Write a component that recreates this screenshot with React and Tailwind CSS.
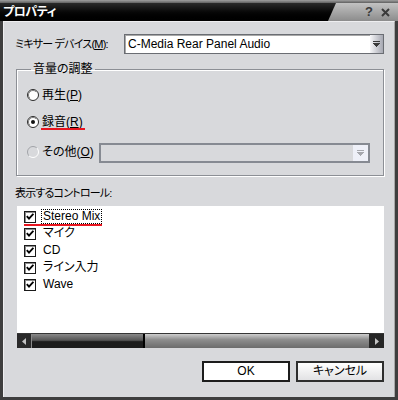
import React from 'react';

// combo arrow: bar + small triangle
function DropArrow({ color = '#3a3a3a' }) {
  return (
    <svg width="7" height="6" viewBox="0 0 7 6" fill={color} shapeRendering="crispEdges">
      <rect x="0" y="0" width="7" height="1" />
      <rect x="0" y="2" width="7" height="1" />
      <rect x="1" y="3" width="5" height="1" />
      <rect x="2" y="4" width="3" height="1" />
      <rect x="3" y="5" width="1" height="1" />
    </svg>
  );
}

function Radio({ checked, disabled }) {
  if (disabled) {
    return (
      <svg width="12" height="12" viewBox="0 0 12 12" className="shrink-0">
        <path d="M2.1 9.9 A5.5 5.5 0 0 1 9.9 2.1" fill="none" stroke="#a2a4a8" />
        <path d="M9.9 2.1 A5.5 5.5 0 0 1 2.1 9.9" fill="none" stroke="#ffffff" />
      </svg>
    );
  }
  return (
    <svg width="12" height="12" viewBox="0 0 12 12" className="shrink-0">
      <circle cx="6" cy="6" r="5.5" fill="#fff" stroke="#2a2a2a" />
      <path d="M2.8 9.2 A4.5 4.5 0 0 1 9.2 2.8" fill="none" stroke="#7c7c7c" />
      {checked && <circle cx="6" cy="6" r="2" fill="#111" />}
    </svg>
  );
}

function CheckBox() {
  return (
    <span className="w-[12px] h-[12px] shrink-0 border border-[#1a1a1a] bg-white flex items-center justify-center shadow-[inset_1px_1px_0_#8c8c8c]">
      <svg width="8" height="7" viewBox="0 0 8 7">
        <path d="M0.8 3.2 L3 5.6 L7.4 0.8" fill="none" stroke="#000" strokeWidth="1.9" />
      </svg>
    </span>
  );
}

const controls = ['Stereo Mix', 'マイク', 'CD', 'ライン入力', 'Wave'];

export default function App() {
  return (
    <div className="w-[398px] h-[400px] flex flex-col bg-[#3e3e3e] overflow-hidden select-none text-[12px] text-black font-['Liberation_Sans','Noto_Sans_CJK_JP',sans-serif] [font-feature-settings:'palt']">
      {/* title bar */}
      <div className="h-[21px] shrink-0 flex flex-col">
        <div className="h-[3px] bg-linear-to-b from-[#a0a0a0] to-[#606060]" />
        <div className="flex-1 flex bg-linear-to-b from-[#c2c2c2] to-[#8c8c8c]">
          <div className="w-[336px] flex items-center pl-[3px] bg-linear-to-b from-[#2a2a2a] via-[#080808] to-black [clip-path:polygon(0_0,100%_0,calc(100%-8px)_100%,0_100%)]">
            <span className="text-white font-bold text-[12px] leading-[14px] tracking-[-0.5px]">プロパティ</span>
          </div>
          <div className="flex-1 flex items-center justify-end gap-[8px] pr-[8px]">
            <span className="text-[#3a3a3a] font-bold text-[13px] leading-[14px]">?</span>
            <svg width="9" height="9" viewBox="0 0 9 9">
              <path d="M1 1 L8 8 M8 1 L1 8" stroke="#3a3a3a" strokeWidth="2" />
            </svg>
          </div>
        </div>
      </div>

      {/* client area */}
      <div className="flex-1 flex px-[3px] pb-[3px]">
        <div className="flex-1 flex flex-col bg-[#d8d9dc] border-t border-l border-[#eeeef0] border-r border-r-[#a8a8a8] pl-[12px] pr-[10px]">
          {/* mixer device */}
          <div className="flex items-center h-[20px] mt-[12px]">
            <span className="w-[108px] shrink-0 whitespace-nowrap text-[11px] leading-[14px] tracking-[-0.8px] -ml-[1px]">
              ミキサー デバイス(<span className="underline">M</span>):
            </span>
            <div className="flex-1 h-[20px] flex items-stretch bg-white border border-[#6a6d73] shadow-[inset_1px_1px_0_#a8a8a8] ml-[1px]">
              <span className="flex-1 pl-[3px] leading-[18px]">C-Media Rear Panel Audio</span>
              <span className="w-[13px] flex items-center justify-center bg-linear-to-r from-[#f6f6f8] to-[#a6a8b2]">
                <DropArrow />
              </span>
            </div>
          </div>

          {/* volume group */}
          <fieldset className="mt-[8px] border border-[#8c8f95] shadow-[inset_1px_1px_0_#ffffff,1px_1px_0_#ffffff] pl-[10px] pr-[12px] pt-[11px] pb-[12px]">
            <legend className="ml-[4px] px-[2px] leading-[14px]">音量の調整</legend>
            <div className="flex items-center gap-[3px] h-[16px]">
              <Radio />
              <span className="leading-[16px]">
                再生(<span className="underline">P</span>)
              </span>
            </div>
            <div className="flex items-center gap-[3px] h-[16px] mt-[11px]">
              <Radio checked />
              <span className="relative leading-[16px]">
                録音(<span className="underline">R</span>)
                <span className="absolute left-[-1px] right-[-2px] top-[14px] h-[2px] bg-[#e8141e]" />
              </span>
            </div>
            <div className="flex items-center h-[20px] mt-[13px]">
              <div className="w-[72px] flex items-center gap-[3px] mt-[-3px]">
                <Radio disabled />
                <span className="leading-[16px]">
                  その他(<span className="underline">O</span>)
                </span>
              </div>
              <div className="w-[271px] h-[20px] flex items-stretch border-2 border-[#868a92] bg-[#d8d9dc]">
                <span className="flex-1" />
                <span className="w-[15px] flex items-center justify-center bg-[#eef0f8]">
                  <DropArrow color="#a6a8ae" />
                </span>
              </div>
            </div>
          </fieldset>

          {/* controls list */}
          <div className="mt-[10px] h-[14px] text-[11px] leading-[14px] tracking-[-0.8px] -ml-[1px]">表示するコントロール:</div>
          <div className="mt-[6px] ml-[1px] h-[142px] flex flex-col bg-white">
            <div className="flex-1 flex flex-col pl-[7px] pt-[2px]">
              {controls.map((c, i) => (
                <div key={c} className="relative h-[17px] flex items-center">
                  <CheckBox />
                  <span
                    className={
                      'ml-[5px] px-[1px] h-[15px] leading-[13px] border ' +
                      (i === 0 ? 'border-dotted border-black' : 'border-transparent')
                    }
                  >
                    {c}
                  </span>
                  {i === 0 && <span className="absolute left-[0px] w-[78px] top-[16px] h-[2px] bg-[#e8141e]" />}
                </div>
              ))}
            </div>
            {/* horizontal scrollbar */}
            <div className="h-[15px] flex border-t border-[#363636]">
              <span className="w-[14px] flex items-center justify-center bg-[#2a2a2a]">
                <svg width="4" height="7" viewBox="0 0 4 7" fill="#c4c4c4"><polygon points="4,0 4,7 0,3.5" /></svg>
              </span>
              <span className="w-[114px] border-l border-[#8a8a8a] border-r-2 border-r-black bg-linear-to-b from-[#8a8a8a] via-[#555555] via-45% to-[#1c1c1c] to-55%" />
              <span className="flex-1 bg-linear-to-b from-[#cfcfcf] via-[#8e8e8e] via-40% to-[#6c6c6c]" />
              <span className="w-[15px] flex items-center justify-center bg-[#262626]">
                <svg width="4" height="7" viewBox="0 0 4 7" fill="#c4c4c4"><polygon points="0,0 0,7 4,3.5" /></svg>
              </span>
            </div>
          </div>

          {/* buttons */}
          <div className="mt-[13px] flex justify-end gap-[6px]">
            <button className="w-[88px] h-[21px] border-2 border-[#1c1c1c] bg-white leading-[15px]">OK</button>
            <button className="w-[88px] h-[21px] border-2 border-[#2e2e2e] bg-linear-to-b from-white to-[#e2e2e4] leading-[15px]">
              キャンセル
            </button>
          </div>
        </div>
      </div>
    </div>
  );
}
